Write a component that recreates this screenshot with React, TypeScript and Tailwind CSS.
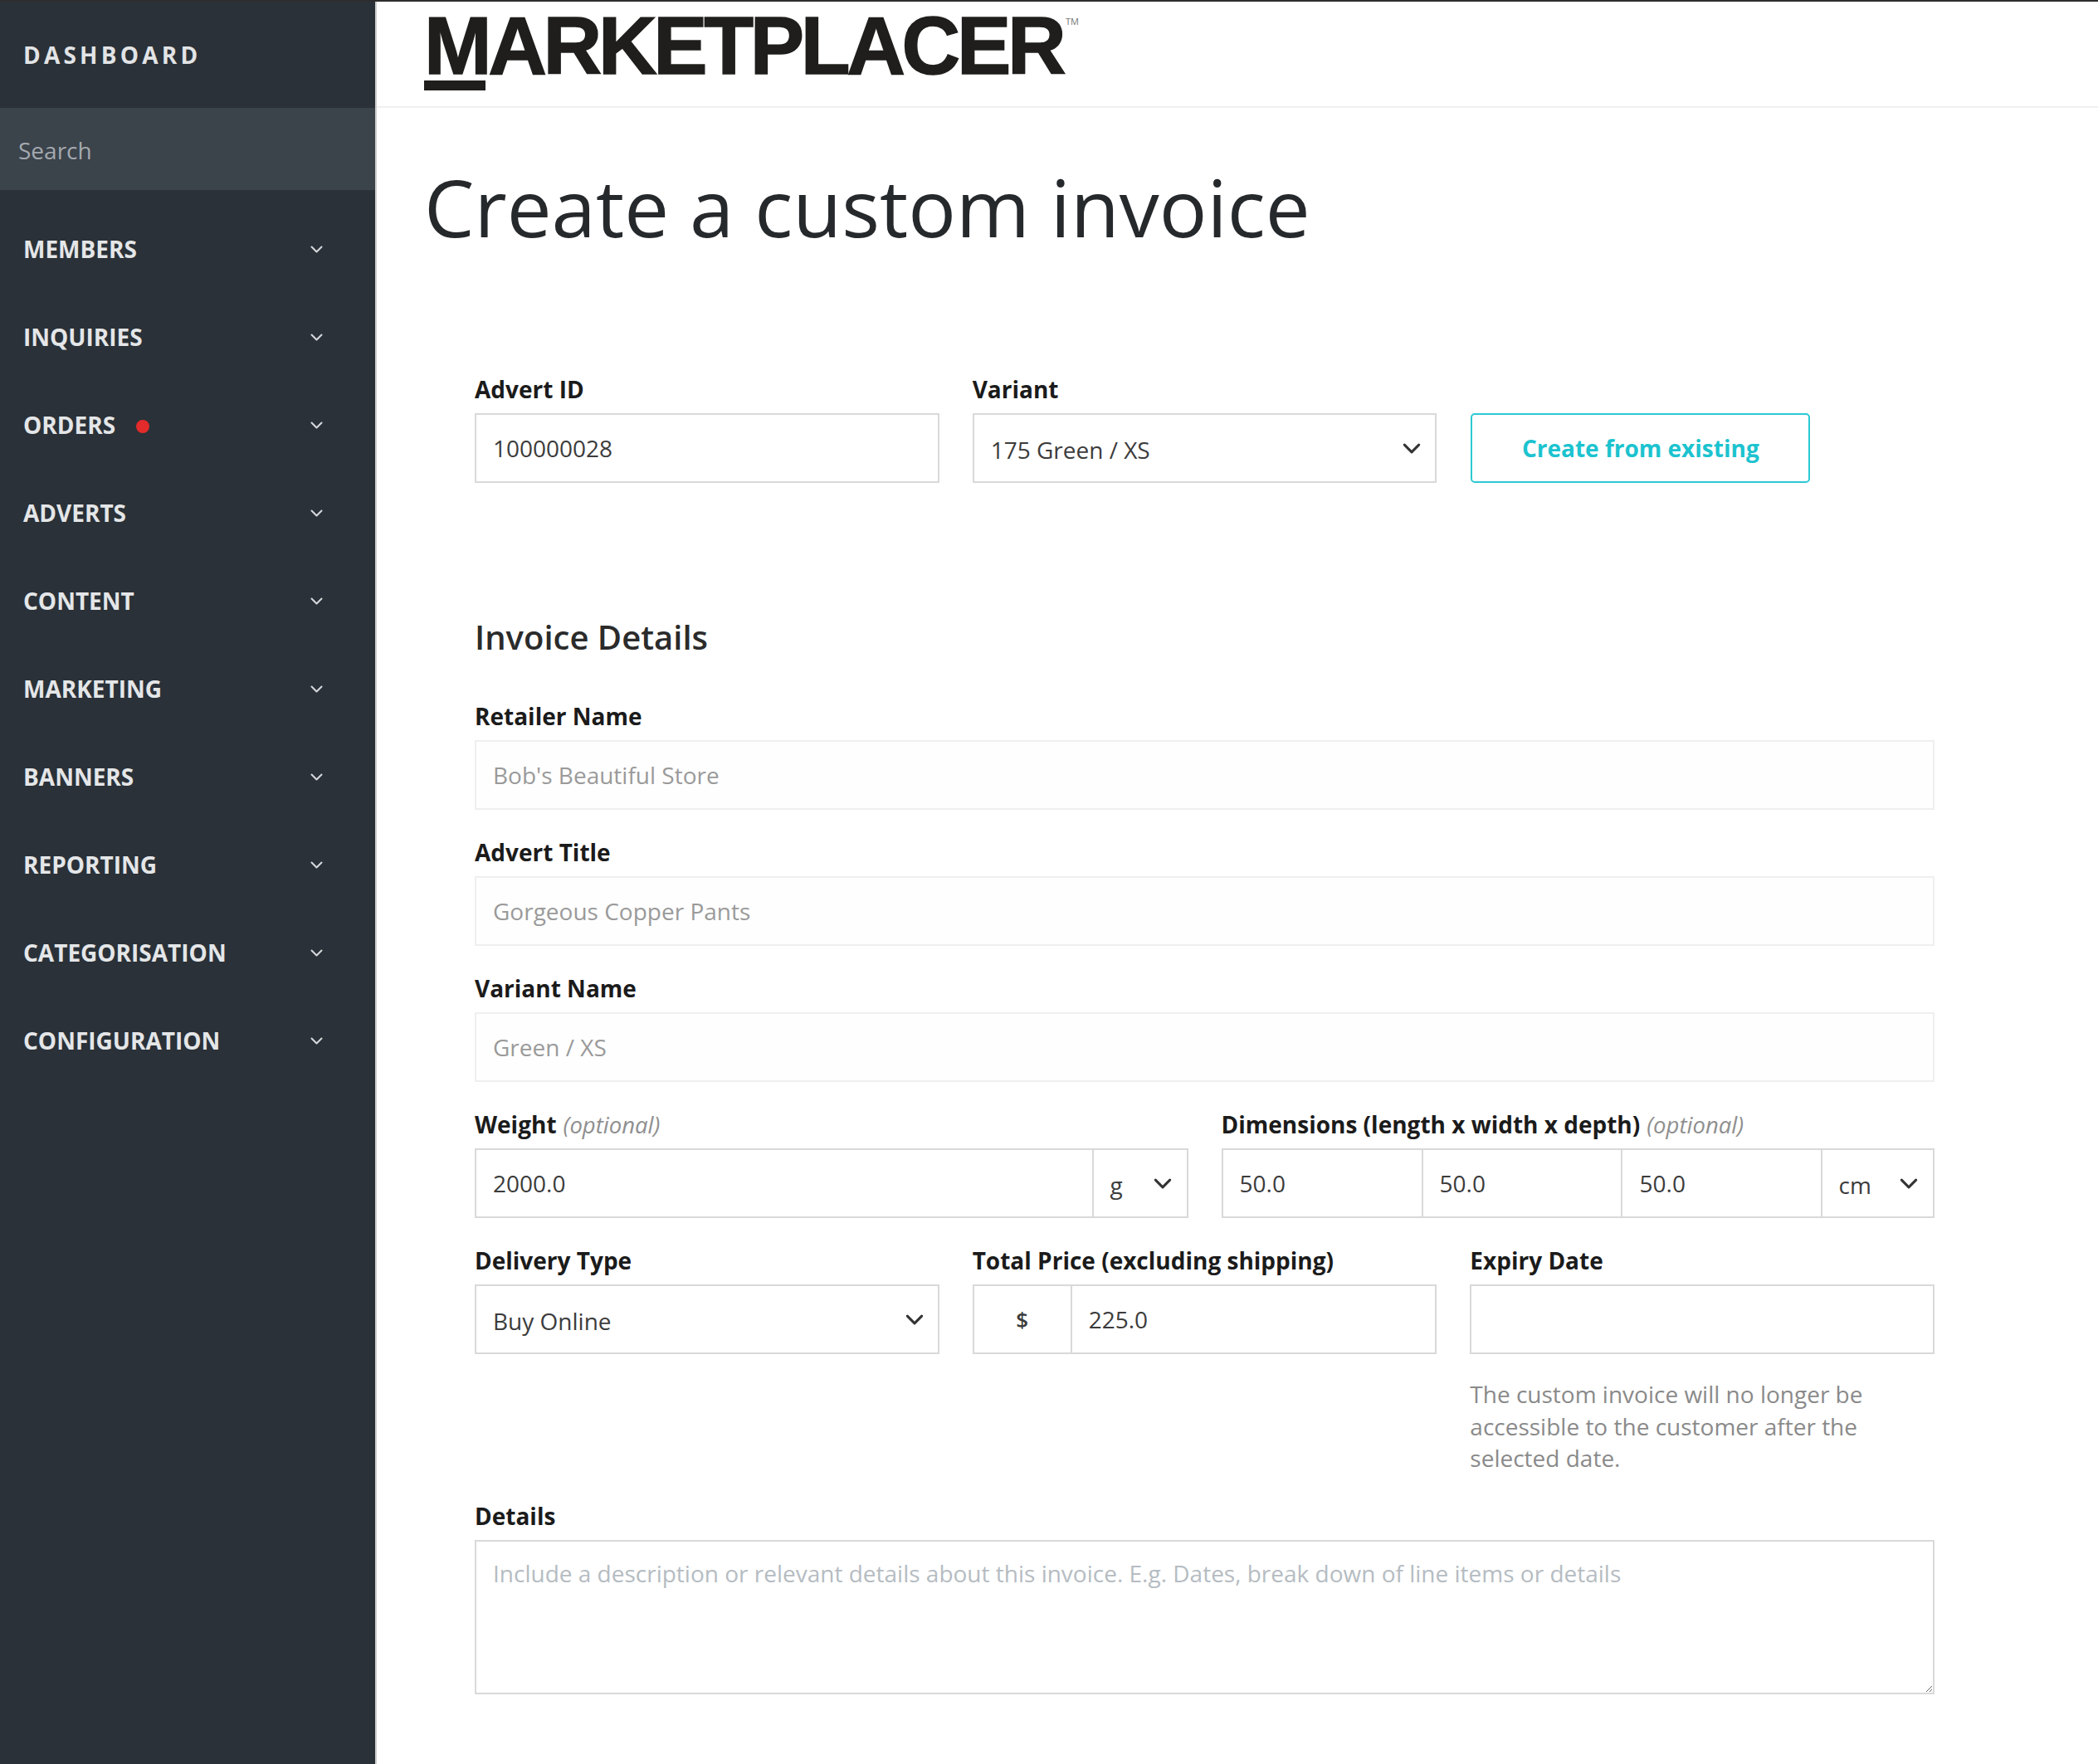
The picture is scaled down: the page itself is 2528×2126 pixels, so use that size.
import React from "react";

const nav = ["MEMBERS", "INQUIRIES", "ORDERS", "ADVERTS", "CONTENT", "MARKETING", "BANNERS", "REPORTING", "CATEGORISATION", "CONFIGURATION"];

function Chevron({ className }: { className: string }) {
  return (
    <svg viewBox="0 0 20 12" fill="none" stroke="currentColor" strokeLinecap="round" strokeLinejoin="round" className={className}>
      <path d="M2 2l8 8 8-8" strokeWidth="2.8" />
    </svg>
  );
}

function Label({ children, optional }: { children: React.ReactNode; optional?: boolean }) {
  return (
    <div className="h-[40px] mb-[9px] leading-[40px] text-[28px] font-bold text-[#1b1b1b] whitespace-nowrap">
      {children}
      {optional && <span className="ml-[8px] text-[27.5px] font-normal italic text-[#8f8f8f]">(optional)</span>}
    </div>
  );
}

const box = "h-[84px] border-2 border-[#d9d9d9] bg-white flex items-center text-[28px] text-[#3c3c3c]";

function Input({ value, muted }: { value: string; muted?: boolean }) {
  return (
    <div className={`h-[84px] border-2 flex items-center px-[20px] text-[28px] ${muted ? "border-[#efefef] bg-[#fefefe] text-[#9a9a9a]" : "border-[#d9d9d9] bg-white text-[#3c3c3c]"}`}>
      {value}
    </div>
  );
}

function Select({ value }: { value: string }) {
  return (
    <div className={`${box} justify-between pl-[20px] pr-[17px]`}>
      <span className="pt-[3px]">{value}</span>
      <Chevron className="w-[22px] h-[13px] text-[#333]" />
    </div>
  );
}

export default function App() {
  return (
    <div className="h-screen overflow-hidden flex bg-white border-t-2 border-[#2d2d2d] text-[#333]" style={{ fontFamily: '"Open Sans", sans-serif' }}>
      <aside className="w-[452px] shrink-0 bg-[#2a3138] border-r-2 border-[#cfcfcf] box-content flex flex-col">
        <div className="h-[128px] flex items-center pl-[28px] text-[28px] font-bold tracking-[4.2px] text-[#e2e4e6]">DASHBOARD</div>
        <div className="h-[99px] bg-[#3b434b] flex items-center pl-[22px] pt-[2px] text-[28px] text-[#a4a9ae]">Search</div>
        <nav className="pt-[18px] flex flex-col">
          {nav.map((item) => (
            <div key={item} className="h-[106px] flex items-center pl-[28px] pr-[63px] text-[28px] font-bold text-[#e4e6e8]">
              <span>{item}</span>
              {item === "ORDERS" && <span className="ml-[25px] mt-[3px] w-[16px] h-[16px] rounded-full bg-[#e32b2b]" />}
              <Chevron className="ml-auto w-[15px] h-[9px] text-[#d5d8da]" />
            </div>
          ))}
        </nav>
      </aside>
      <main className="flex-1 min-w-0">
        <header className="h-[128px] border-b-2 border-[#f1f1f1] pl-[57px] box-border">
          <div className="relative w-[790px]">
            <div className="pt-[3px] text-[98px] leading-[100px] font-bold tracking-[-4.4px] text-[#1f1e1c] whitespace-nowrap [-webkit-text-stroke:1.4px_#1f1e1c]" style={{ fontFamily: '"Liberation Sans", sans-serif' }}>
              MARKETPLACER
            </div>
            <div className="absolute left-[0px] top-[95px] w-[74px] h-[12px] bg-[#1f1e1c]" />
            <span className="absolute left-[773px] top-[18px] text-[11px] leading-none text-[#777]">TM</span>
          </div>
        </header>
        <div className="pl-[57px]">
          <h1 className="mt-[59px] h-[120px] leading-[120px] text-[96px] font-normal text-[#26292c] whitespace-nowrap">Create a custom invoice</h1>
        </div>
        <div className="pl-[118px] w-[1877px] box-border">
          <div className="mt-[140px] grid grid-cols-3 gap-x-[40px]">
            <div>
              <Label>Advert ID</Label>
              <Input value="100000028" />
            </div>
            <div>
              <Label>Variant</Label>
              <Select value="175 Green / XS" />
            </div>
            <div className="pt-[49px]">
              <button className="ml-[1px] w-[409px] h-[84px] border-2 border-[#2cc9d4] rounded-[5px] text-[28px] font-bold text-[#1cc3cf]">Create from existing</button>
            </div>
          </div>
          <h2 className="mt-[156px] h-[60px] leading-[60px] text-[40px] font-semibold text-[#2b2b2b]">Invoice Details</h2>
          <div className="mt-[45px] flex flex-col gap-y-[31px]">
            <div>
              <Label>Retailer Name</Label>
              <Input value="Bob's Beautiful Store" muted />
            </div>
            <div>
              <Label>Advert Title</Label>
              <Input value="Gorgeous Copper Pants" muted />
            </div>
            <div>
              <Label>Variant Name</Label>
              <Input value="Green / XS" muted />
            </div>
            <div className="grid grid-cols-2 gap-x-[40px]">
              <div>
                <Label optional>Weight</Label>
                <div className={box}>
                  <div className="flex-1 px-[20px]">2000.0</div>
                  <div className="w-[114px] h-full border-l-2 border-[#d9d9d9] flex items-center justify-between pl-[20px] pr-[18px]">
                    <span className="pt-[3px]">g</span>
                    <Chevron className="w-[22px] h-[13px] text-[#333]" />
                  </div>
                </div>
              </div>
              <div>
                <Label optional>Dimensions (length x width x depth)</Label>
                <div className={box}>
                  <div className="w-[239px] h-full flex items-center pl-[20px]">50.0</div>
                  <div className="w-[240px] h-full border-l-2 border-[#d9d9d9] flex items-center pl-[20px]">50.0</div>
                  <div className="w-[241px] h-full border-l-2 border-[#d9d9d9] flex items-center pl-[21px]">50.0</div>
                  <div className="flex-1 h-full border-l-2 border-[#d9d9d9] flex items-center justify-between pl-[20px] pr-[18px]">
                    <span className="pt-[3px]">cm</span>
                    <Chevron className="w-[22px] h-[13px] text-[#333]" />
                  </div>
                </div>
              </div>
            </div>
            <div className="grid grid-cols-3 gap-x-[40px]">
              <div>
                <Label>Delivery Type</Label>
                <Select value="Buy Online" />
              </div>
              <div>
                <Label>Total Price (excluding shipping)</Label>
                <div className={box}>
                  <div className="w-[118px] h-full border-r-2 border-[#d9d9d9] flex items-center justify-center font-semibold text-[26px]">$</div>
                  <div className="pl-[20px]">225.0</div>
                </div>
              </div>
              <div>
                <Label>Expiry Date</Label>
                <div className={box} />
                <p className="mt-[29px] text-[28px] leading-[38.7px] text-[#8a8a8a]">The custom invoice will no longer be accessible to the customer after the selected date.</p>
              </div>
            </div>
            <div className="-mt-[1px]">
              <Label>Details</Label>
              <textarea
                readOnly
                placeholder="Include a description or relevant details about this invoice. E.g. Dates, break down of line items or details"
                className="block w-full h-[186px] border-2 border-[#d9d9d9] px-[20px] py-[19px] text-[28px] leading-[38px] outline-none resize-y placeholder:text-[#b5bcc2]"
              />
            </div>
          </div>
        </div>
      </main>
    </div>
  );
}
